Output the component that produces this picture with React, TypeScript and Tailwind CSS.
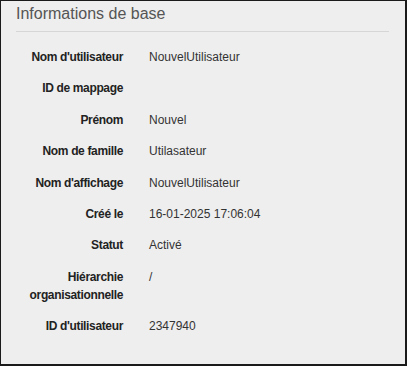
const rows: { label: string; value: string }[] = [
  { label: "Nom d'utilisateur", value: 'NouvelUtilisateur' },
  { label: 'ID de mappage', value: '' },
  { label: 'Prénom', value: 'Nouvel' },
  { label: 'Nom de famille', value: 'Utilasateur' },
  { label: "Nom d'affichage", value: 'NouvelUtilisateur' },
  { label: 'Créé le', value: '16-01-2025 17:06:04' },
  { label: 'Statut', value: 'Activé' },
  { label: 'Hiérarchie organisationnelle', value: '/' },
  { label: "ID d'utilisateur", value: '2347940' },
]

export default function App() {
  return (
    <div
      className="w-[407px] h-[366px] bg-[#eeeeee] border-t border-l border-r-2 border-b-2 border-[#1a1a1a] overflow-hidden"
      style={{ fontFamily: '"Liberation Sans", Arial, sans-serif' }}
    >
      <div className="ml-[15px] mr-[16px] pt-[3px] pb-[7px] border-b border-[#d6d6d6]">
        <h2 className="text-[16px] leading-[20px] text-[#555555]">Informations de base</h2>
      </div>

      <div className="flex flex-col gap-[13.4px] pt-[16px]">
        {rows.map((r) => (
          <div key={r.label} className="flex text-[12px] leading-[18px]">
            <div className="w-[122px] shrink-0 pl-[24px] text-right font-bold tracking-[-0.35px] text-[#222222]">
              {r.label}
            </div>
            <div className="pl-[26px] text-[#333333]">{r.value}</div>
          </div>
        ))}
      </div>
    </div>
  )
}
